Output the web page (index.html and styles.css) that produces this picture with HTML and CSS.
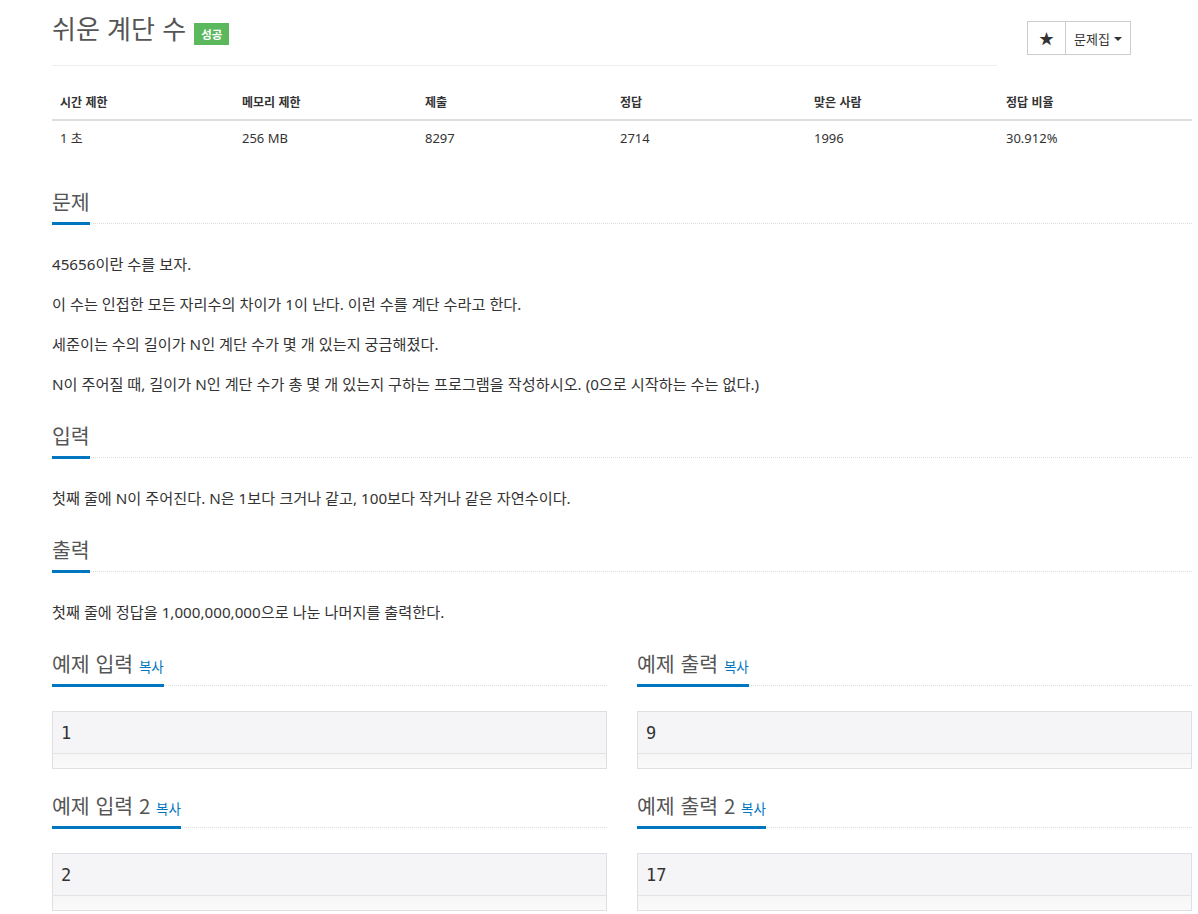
FILE: index.html
```html
<!DOCTYPE html>
<html lang="ko">
<head>
<meta charset="utf-8">
<title>쉬운 계단 수</title>
<link rel="stylesheet" href="styles.css">
</head>
<body>
<div class="container">
  <div class="page-header-row">
    <div class="title-col">
      <h1 class="title">쉬운 계단 수 <span class="badge-success">성공</span></h1>
    </div>
    <div class="actions-col">
      <div class="btn-group">
        <button class="btn btn-star">★</button>
        <button class="btn btn-menu">문제집 <span class="caret"></span></button>
      </div>
    </div>
  </div>

  <div class="content">
    <table class="info-table">
      <thead>
        <tr><th>시간 제한</th><th>메모리 제한</th><th>제출</th><th>정답</th><th>맞은 사람</th><th>정답 비율</th></tr>
      </thead>
      <tbody>
        <tr><td>1 초</td><td>256 MB</td><td>8297</td><td>2714</td><td>1996</td><td>30.912%</td></tr>
      </tbody>
    </table>

    <section class="section">
      <div class="headline"><h2>문제</h2></div>
      <div class="section-body">
        <p>45656이란 수를 보자.</p>
        <p>이 수는 인접한 모든 자리수의 차이가 1이 난다. 이런 수를 계단 수라고 한다.</p>
        <p>세준이는 수의 길이가 N인 계단 수가 몇 개 있는지 궁금해졌다.</p>
        <p>N이 주어질 때, 길이가 N인 계단 수가 총 몇 개 있는지 구하는 프로그램을 작성하시오. (0으로 시작하는 수는 없다.)</p>
      </div>
    </section>

    <section class="section">
      <div class="headline"><h2>입력</h2></div>
      <div class="section-body">
        <p>첫째 줄에 N이 주어진다. N은 1보다 크거나 같고, 100보다 작거나 같은 자연수이다.</p>
      </div>
    </section>

    <section class="section">
      <div class="headline"><h2>출력</h2></div>
      <div class="section-body">
        <p>첫째 줄에 정답을 1,000,000,000으로 나눈 나머지를 출력한다.</p>
      </div>
    </section>

    <div class="samples">
      <section class="sample-section">
        <div class="headline"><h2>예제 입력 <a class="copy">복사</a></h2></div>
        <div class="sample-box"><pre class="sample-data">1</pre><div class="scroll-track"></div></div>
      </section>
      <section class="sample-section">
        <div class="headline"><h2>예제 출력 <a class="copy">복사</a></h2></div>
        <div class="sample-box"><pre class="sample-data">9</pre><div class="scroll-track"></div></div>
      </section>
      <section class="sample-section">
        <div class="headline"><h2>예제 입력 2 <a class="copy">복사</a></h2></div>
        <div class="sample-box"><pre class="sample-data">2</pre><div class="scroll-track"></div></div>
      </section>
      <section class="sample-section">
        <div class="headline"><h2>예제 출력 2 <a class="copy">복사</a></h2></div>
        <div class="sample-box"><pre class="sample-data">17</pre><div class="scroll-track"></div></div>
      </section>
    </div>
  </div>
</div>
</body>
</html>
```

FILE: styles.css
```css
html, body {
  margin: 0;
  padding: 0;
  background: #fff;
}
body {
  font-family: "Noto Sans", "Noto Sans CJK KR", sans-serif;
  font-size: 15.2px;
  color: #333;
}
.container {
  margin-left: 52px;
  width: 1140px;
}

/* header */
.page-header-row {
  display: flex;
  align-items: flex-start;
}
.title-col {
  width: 945px;
  border-bottom: 1px solid #eee;
  padding-top: 12px;
  padding-bottom: 22px;
}
.title {
  margin: 0;
  font-family: "Noto Sans CJK KR", sans-serif;
  font-size: 26px;
  line-height: 31px;
  height: 31px;
  font-weight: 400;
  color: #555;
  display: flex;
  align-items: flex-start;
}
.badge-success {
  display: inline-block;
  margin-left: 8px;
  margin-top: 11px;
  height: 22px;
  line-height: 22px;
  padding: 0 7px;
  background: #5cb85c;
  color: #fff;
  font-size: 11.5px;
  font-weight: 700;
}
.actions-col {
  margin-left: 30px;
  padding-top: 21px;
}
.btn-group {
  display: flex;
  border: 1px solid #ccc;
  height: 32px;
}
.btn {
  background: #fff;
  border: 0;
  margin: 0;
  padding: 0;
  font-family: "Noto Sans CJK KR", sans-serif;
  color: #333;
  cursor: pointer;
}
.btn-star {
  width: 38px;
  border-right: 1px solid #ccc;
  font-size: 15px;
  line-height: 32px;
}
.btn-menu {
  width: 64px;
  font-size: 13px;
  display: flex;
  align-items: center;
  justify-content: center;
  gap: 4px;
}
.caret {
  display: inline-block;
  width: 0;
  height: 0;
  border-left: 4px solid transparent;
  border-right: 4px solid transparent;
  border-top: 4px solid #333;
  margin-top: 1px;
}

/* content flow */
.content {
  display: flex;
  flex-direction: column;
}

.info-table {
  margin-top: 19px;
  margin-bottom: 20px;
  width: 1140px;
  border-collapse: collapse;
  table-layout: fixed;
}
.info-table th, .info-table td {
  text-align: left;
  padding: 8px;
  line-height: 18px;
}
.info-table th {
  font-family: "Noto Sans CJK KR", sans-serif;
  font-size: 12px;
  font-weight: 700;
  border-bottom: 2px solid #ddd;
}
.info-table td {
  font-size: 13px;
}
.info-table th:nth-child(1) { width: 166px; }
.info-table th:nth-child(2) { width: 167px; }
.info-table th:nth-child(3) { width: 179px; }
.info-table th:nth-child(4) { width: 178px; }
.info-table th:nth-child(5) { width: 176px; }
.info-table th:nth-child(6) { width: 178px; }

.section {
  margin-top: 15px;
}
.headline {
  border-bottom: 1px dotted #ddd;
}
.headline h2 {
  display: inline-block;
  margin: 0 0 -2px;
  padding-bottom: 10px;
  border-bottom: 3px solid #0076c0;
  font-family: "Noto Sans CJK KR", sans-serif;
  font-size: 20.5px;
  line-height: 22px;
  height: 22px;
  font-weight: 400;
  color: #555;
}
.section-body {
  margin-top: 25px;
}
.section-body p {
  margin: 0 0 10px;
  line-height: 30px;
}

.copy {
  font-size: 13.5px;
  line-height: 12px;
  color: #0076c0;
  text-decoration: none;
}

.samples {
  display: grid;
  grid-template-columns: 555px 555px;
  column-gap: 30px;
}
.sample-section {
  margin-top: 15px;
  display: flex;
  flex-direction: column;
}
.sample-box {
  margin-top: 25px;
  margin-bottom: 10px;
  border: 1px solid #dfdfe3;
  background: #f5f5f7;
}
.sample-data {
  margin: 0;
  padding: 9.5px 9px 9.5px 8px;
  font-family: "DejaVu Sans Mono", monospace;
  font-size: 17px;
  line-height: 22px;
  color: #333;
}
.scroll-track {
  height: 14px;
  border-top: 1px solid #e3e3e6;
  background: linear-gradient(#f6f6f7, #fafafa);
}
```
